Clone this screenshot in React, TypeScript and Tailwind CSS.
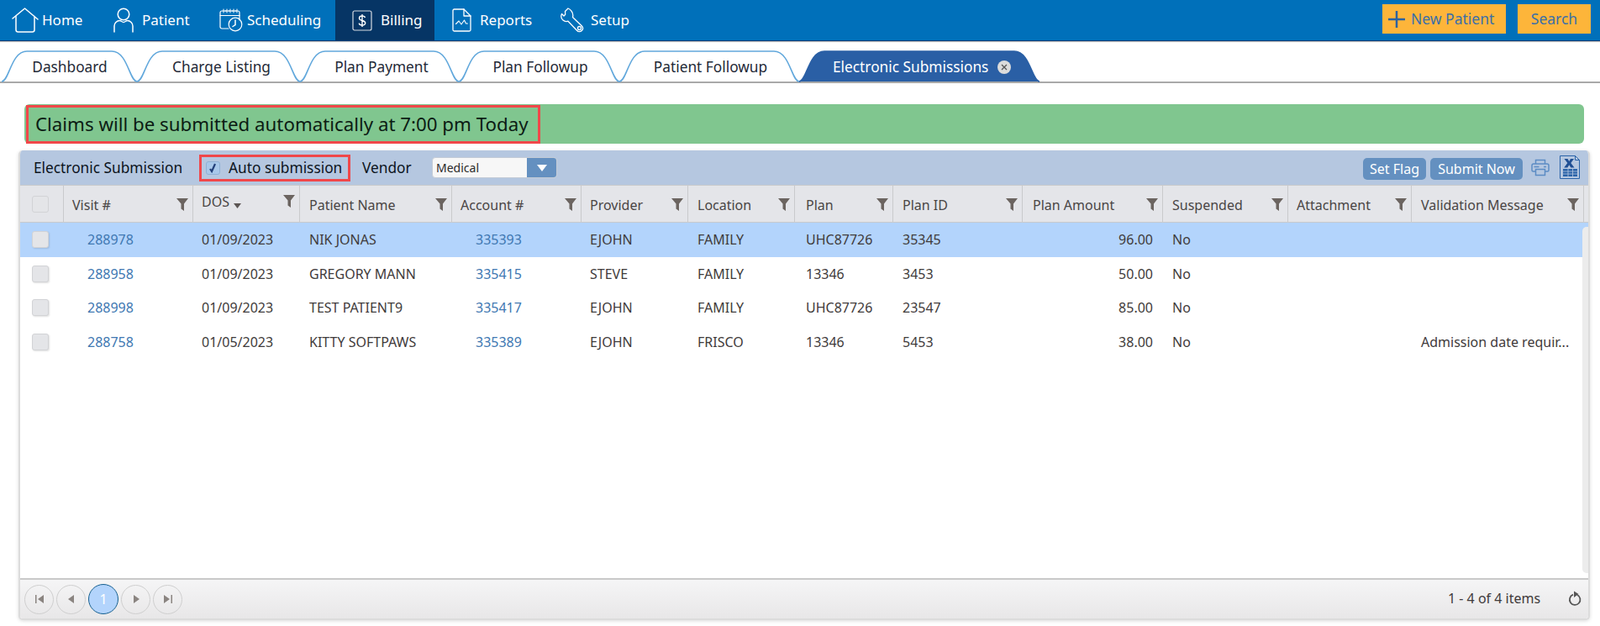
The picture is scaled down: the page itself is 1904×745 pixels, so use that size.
const font = "font-['Open_Sans',sans-serif]"

const cols = 'grid grid-cols-[52px_154px_127px_181px_154px_127px_127px_117px_154px_167px_149px_147px_205px]'

const headers = [
  { label: 'Visit #', pad: 'pl-[10px]' },
  { label: 'DOS', pad: 'pl-[10px]', sort: true },
  { label: 'Patient Name', pad: 'pl-[11px]' },
  { label: 'Account #', pad: 'pl-[10px]' },
  { label: 'Provider', pad: 'pl-[10px]' },
  { label: 'Location', pad: 'pl-[11px]' },
  { label: 'Plan', pad: 'pl-[13px]' },
  { label: 'Plan ID', pad: 'pl-[11px]' },
  { label: 'Plan Amount', pad: 'pl-[12px]' },
  { label: 'Suspended', pad: 'pl-[11px]' },
  { label: 'Attachment', pad: 'pl-[10px]' },
  { label: 'Validation Message', pad: 'pl-[11px]' }
]

const rows = [
  ['288978', '01/09/2023', 'NIK JONAS', '335393', 'EJOHN', 'FAMILY', 'UHC87726', '35345', '96.00', 'No', ''],
  ['288958', '01/09/2023', 'GREGORY MANN', '335415', 'STEVE', 'FAMILY', '13346', '3453', '50.00', 'No', ''],
  ['288998', '01/09/2023', 'TEST PATIENT9', '335417', 'EJOHN', 'FAMILY', 'UHC87726', '23547', '85.00', 'No', ''],
  ['288758', '01/05/2023', 'KITTY SOFTPAWS', '335389', 'EJOHN', 'FRISCO', '13346', '5453', '38.00', 'No', 'Admission date requir...']
]

const tabs = [
  { label: 'Dashboard', x0: 2, x1: 163, pad: 'pl-[1px]' },
  { label: 'Charge Listing', x0: 163, x1: 357, pad: 'pl-[7px]' },
  { label: 'Plan Payment', x0: 357, x1: 546, pad: 'pl-[5px]' },
  { label: 'Plan Followup', x0: 546, x1: 737, pad: 'pl-[3px]' },
  { label: 'Patient Followup', x0: 737, x1: 951, pad: 'pl-[3px]' }
]

const HomeIcon = () => (
  <svg width="32" height="30" viewBox="0 0 32 30" fill="none" stroke="currentColor" strokeWidth="1.5" strokeLinejoin="round" strokeLinecap="round">
    <path d="M1 13 15.5 1 31 14" />
    <path d="M5 10.5V26.5a2.5 2.5 0 0 0 2.5 2.5h17a2.5 2.5 0 0 0 2.5-2.5V10.5" />
  </svg>
)

const PatientIcon = () => (
  <svg width="24" height="30" viewBox="0 0 24 30" fill="none" stroke="currentColor" strokeWidth="1.5" strokeLinecap="round">
    <circle cx="12" cy="8" r="6.8" />
    <path d="M1 29v-7c0-3.5 3-6.5 6.5-6.5 1.5 0 3 2 4.5 2s3-2 4.5-2c3.5 0 6.5 3 6.5 6.5v7" />
  </svg>
)

const ScheduleIcon = () => (
  <svg width="28" height="28" viewBox="0 0 28 28" fill="none" stroke="currentColor" strokeWidth="1.2" strokeLinecap="round">
    <path d="M11 24H3a2 2 0 0 1-2-2V5a2 2 0 0 1 2-2h19a2 2 0 0 1 2 2v9" />
    <path d="M1 8.5h23" />
    <path d="M5 1v4M9 1v4M13 1v4M17 1v4M21 1v4" strokeWidth="1" />
    <path d="M7 3h1M11 3h1M15 3h1M19 3h1" />
    <circle cx="19" cy="19" r="7.8" />
    <path d="M19 14v5.5l-3 2" strokeWidth="1.5" />
  </svg>
)

const BillingIcon = () => (
  <svg width="24" height="25" viewBox="0 0 24 25" fill="none" stroke="currentColor" strokeWidth="1.2">
    <rect x="1" y="1" width="22" height="23" rx="2" stroke="#d6dbe2" />
    <path d="M15.5 9c-.4-1.5-1.8-2-3.5-2-2 0-3.5 1-3.5 2.7 0 3.8 7.2 1.8 7.2 5.6 0 1.7-1.6 2.7-3.7 2.7-1.9 0-3.5-.8-3.8-2.4M12 5v15" strokeWidth="1.4" />
  </svg>
)

const ReportIcon = () => (
  <svg width="23" height="28" viewBox="0 0 23 28" fill="none" stroke="currentColor" strokeWidth="1.3" strokeLinejoin="round" strokeLinecap="round">
    <path d="M14 1H2.5A1.5 1.5 0 0 0 1 2.5v23A1.5 1.5 0 0 0 2.5 27h18a1.5 1.5 0 0 0 1.5-1.5V9z" />
    <path d="M14 1v8h8" />
    <path d="M4.5 18.5 8 15l3 4 3.5-5 2 4h2" strokeWidth="1.1" />
  </svg>
)

const WrenchIcon = () => (
  <svg width="30" height="30" viewBox="0 0 30 30" fill="none" stroke="currentColor" strokeWidth="1.3" strokeLinejoin="round">
    <path d="M9 1 5.5 4.5l.2 3.8L4 10 1.5 7.5C.3 10 .8 13 3 15c1.7 1.5 4 2 6 1.2l10.5 11c1.7 1.9 4 2 5.7.3 1.7-1.7 1.7-4 0-5.7L14.500 11.500c.7-2.500.2-5-1.500-7.300C11.800 2.600 10.500 1.500 9 1z" />
    <circle cx="22.500" cy="24.500" r="2" />
  </svg>
)

const navIcons: Record<string, () => React.ReactElement> = {
  Home: HomeIcon,
  Patient: PatientIcon,
  Scheduling: ScheduleIcon,
  Billing: BillingIcon,
  Reports: ReportIcon,
  Setup: WrenchIcon
}

const Funnel = ({ className }: { className: string }) => (
  <svg className={className} width="14" height="15" viewBox="0 0 14 15" fill="#6b6460">
    <path d="M0 0h14L9 6.500V15L5.500 12.500V6.500z" />
  </svg>
)

const Check = ({ className }: { className: string }) => (
  <span className={`block w-[20px] h-[20px] rounded-[3px] border border-[#d2d3d6] bg-[#e4e5e8] ${className}`} />
)

const PagerBtn = ({ d }: { d: string }) => (
  <span className="w-[35px] h-[35px] rounded-full border border-[#cfcfcf] flex items-center justify-center">
    <svg width="12" height="12" viewBox="0 0 12 12" fill="#8a8480">
      <path d={d} />
    </svg>
  </span>
)

const TabShape = ({ w, active }: { w: number; active?: boolean }) => (
  <svg className="absolute left-0 top-0" width={w} height="40" viewBox={`0 0 ${w} 40`} fill="none">
    <path
      d={`M0 39C9 39 11 3 30 3H${w - 30}C${w - 11} 3 ${w - 9} 39 ${w} 39`}
      fill={active ? '#2a5fa5' : '#fff'}
      stroke={active ? '#2a5fa5' : '#62a8dc'}
      strokeWidth="1.6"
    />
  </svg>
)

const App = () => {
  return (
    <div className={`relative w-[1904px] h-[745px] overflow-hidden bg-white text-[#3c3c3c] ${font}`}>
      {/* top nav */}
      <div className="h-[49px] bg-[#0070ba] border-b border-[#0b3d78] shadow-[0_1px_1px_rgba(0,0,0,0.25)] flex items-start">
        <div className="flex h-[48px] text-white text-[17px]">
          {['Home', 'Patient', 'Scheduling', 'Billing', 'Reports', 'Setup'].map((n) => {
            const Icon = navIcons[n]
            const cls: Record<string, string> = {
              Home: 'w-[117px] pl-[14px] gap-[4px]',
              Patient: 'w-[127px] pl-[18px] gap-[10px]',
              Scheduling: 'w-[155px] pl-[17px] gap-[5px]',
              Billing: 'w-[118px] pl-[20px] gap-[10px] bg-[#063565]',
              Reports: 'w-[133px] pl-[21px] gap-[10px]',
              Setup: 'w-[120px] pl-[17px] gap-[6px]'
            }
            return (
              <div key={n} className={`h-[48px] flex items-center ${cls[n]}`}>
                <Icon />
                <span>{n}</span>
              </div>
            )
          })}
        </div>
        <div className="ml-auto flex mt-[5px] mr-[11px] gap-[14px] text-[#3b6fa8] text-[17.500px]">
          <div className="w-[147px] h-[35px] bg-[#fdb53a] flex items-center pl-[7px] gap-[7px]">
            <svg width="20" height="20" viewBox="0 0 20 20" stroke="#2c62a0" strokeWidth="2.500">
              <path d="M10 0v20M0 10h20" />
            </svg>
            <span>New Patient</span>
          </div>
          <div className="w-[87px] h-[35px] bg-[#fdb53a] flex items-center justify-center">Search</div>
        </div>
      </div>

      {/* tabs */}
      <div className="absolute left-0 top-[58px] w-full h-[41px] border-b-2 border-[#a9a9a9]">
        {tabs.map((t) => (
          <div
            key={t.label}
            className={`absolute top-0 h-[40px] flex items-center justify-center text-[17.300px] text-[#1f2a37] ${t.pad}`}
            style={{ left: t.x0, width: t.x1 - t.x0 }}
          >
            <TabShape w={t.x1 - t.x0} />
            <span className="relative top-[2px]">{t.label}</span>
          </div>
        ))}
        <div className="absolute left-[951px] top-0 w-[286px] h-[40px] text-white text-[17.300px]">
          <TabShape w={286} active />
          <span className="absolute left-[40px] top-[9px]">Electronic Submissions</span>
          <span className="absolute left-[236px] top-[14px] w-[16px] h-[16px] rounded-full bg-[#dcdcdc] flex items-center justify-center">
            <svg width="8" height="8" viewBox="0 0 8 8" stroke="#555" strokeWidth="1.300">
              <path d="M1 1l6 6M7 1 1 7" />
            </svg>
          </span>
        </div>
      </div>

      {/* notice */}
      <div className="absolute left-[29px] top-[124px] w-[1856px] h-[47px] bg-[#80c68f] rounded-[6px]" />
      <div className="absolute left-[31px] top-[125px] w-[612px] h-[46px] border-[3px] border-[#f0474a] flex items-center pl-[8px] text-[22.300px] whitespace-nowrap text-[#0c1c14]">
        Claims will be submitted automatically at 7:00 pm Today
      </div>

      {/* grid panel */}
      <div className="absolute left-[22px] top-[179px] w-[1870px] h-[559px] rounded-[5px] border-2 border-t-0 border-[#dcdcdc] bg-white shadow-[0_1px_4px_rgba(0,0,0,0.15)] overflow-hidden">
        <div className="h-[41px] bg-[#b5c7e0] relative text-[#0c141d]">
          <span className="absolute left-[16px] top-[8px] text-[17.300px]">Electronic Submission</span>
          <div className="absolute left-[213px] top-[5px] w-[180px] h-[32px] border-[3px] border-[#f0474a]" />
          <span className="absolute left-[221px] top-[13px] w-[17px] h-[16px] rounded-[3px] bg-[#a9c8ea] border border-[#8fb0d4] flex items-center justify-center">
            <svg width="11" height="12" viewBox="0 0 11 12" fill="none" stroke="#23407a" strokeWidth="2.200">
              <path d="M2 7l2 3 4-9" />
            </svg>
          </span>
          <span className="absolute left-[248px] top-[8px] text-[17.300px]">Auto submission</span>
          <span className="absolute left-[407px] top-[8px] text-[17.300px]">Vendor</span>
          <div className="absolute left-[490px] top-[8px] w-[149px] h-[25px] rounded-[4px] bg-[#f7f7f7] border border-[#c3cbd6] flex overflow-hidden">
            <span className="flex-1 pl-[4px] text-[14px] leading-[23px] text-[#2b2b2b]">Medical</span>
            <span className="w-[35px] bg-[#6490c0] flex items-center justify-center">
              <svg width="12" height="8" viewBox="0 0 12 8" fill="#fff">
                <path d="M0 0h12L6 8z" />
              </svg>
            </span>
          </div>
          <span className="absolute left-[1598px] top-[9px] w-[75px] h-[26px] rounded-[5px] bg-[#6490c0] text-white text-[16px] leading-[26px] text-center">Set Flag</span>
          <span className="absolute left-[1678px] top-[9px] w-[110px] h-[26px] rounded-[5px] bg-[#6490c0] text-white text-[16px] leading-[26px] text-center">Submit Now</span>
          <svg className="absolute left-[1798px] top-[10px]" width="22" height="21" viewBox="0 0 22 21" fill="none" stroke="#5c8cc4" strokeWidth="1.500">
            <path d="M5.500 6V1.500h11V6" />
            <path d="M5 15H2.500A1.500 1.500 0 0 1 1 13.500V8a2 2 0 0 1 2-2h16a2 2 0 0 1 2 2v5.500a1.500 1.500 0 0 1-1.500 1.500H17" />
            <path d="M5.500 12.500h11v7h-11z" />
            <path d="M3.500 9.500h6M15 9.500h3" />
          </svg>
          <svg className="absolute left-[1832px] top-[6px]" width="24" height="28" viewBox="0 0 24 28" fill="none">
            <path d="M.5.500h18l5 5v22H.5z" stroke="#2a63a8" />
            <path d="M18.500.500v5h5" stroke="#2a63a8" />
            <path d="M5.500 4h4l1.800 3L13 4h4l-3.700 5L17.500 14.500h-4.200L11.300 11.200 9.300 14.500H5.200L9.300 9z" fill="#1f4f94" />
            <path d="M4 16h17v9H4z" fill="#2a63a8" />
            <path d="M4 19h17M4 22h17M10 16v9M15.500 16v9" stroke="#b5c7e0" strokeWidth=".8" />
          </svg>
        </div>

        {/* column headers */}
        <div className={`${cols} h-[45px] bg-[#e4e5e9] border-y border-[#c9cacc] text-[16px] text-[#4a4545]`}>
          <div className="flex items-center pl-[14px] border-r border-[#c9cacc]">
            <Check className="" />
          </div>
          {headers.map((h) => (
            <div key={h.label} className={`relative flex items-center border-r border-[#c9cacc] ${h.pad}`}>
              {h.sort ? (
                <>
                  <span className="relative top-[-3px]">{h.label}</span>
                  <svg className="relative left-[5px] top-[2px]" width="9" height="6" viewBox="0 0 9 6" fill="#5b5553">
                    <path d="M0 0h9L4.500 6z" />
                  </svg>
                </>
              ) : (
                <span className="relative top-[1px]">{h.label}</span>
              )}
              <Funnel className={`absolute right-[5px] ${h.sort ? 'top-[11px]' : 'top-[15px]'}`} />
            </div>
          ))}
        </div>

        {/* rows */}
        {rows.map((r, i) => (
          <div key={r[0]} className={`${cols} h-[40.500px] items-center text-[16px] text-[#3f3b3b] ${i === 0 ? 'bg-[#b3d4fc]' : ''}`}>
            <div className="pl-[14px]">
              <Check className="shadow-[1px_1px_2px_rgba(0,0,0,0.12)]" />
            </div>
            <a className="pl-[28px] text-[#4078b2]">{r[0]}</a>
            <span className="pl-[10px]">{r[1]}</span>
            <span className="pl-[11px]">{r[2]}</span>
            <a className="pl-[28px] text-[#4078b2]">{r[3]}</a>
            <span className="pl-[10px]">{r[4]}</span>
            <span className="pl-[11px]">{r[5]}</span>
            <span className="pl-[13px]">{r[6]}</span>
            <span className="pl-[11px]">{r[7]}</span>
            <span className="pr-[12px] text-right">{r[8]}</span>
            <span className="pl-[11px]">{r[9]}</span>
            <span />
            <span className="pl-[11px] whitespace-nowrap">{r[10]}</span>
          </div>
        ))}

        {/* scrollbar track */}
        <div className="absolute right-0 top-[91px] bottom-[54px] w-[7px] rounded-l-[5px] bg-[#ececec]" />

        {/* footer */}
        <div className="absolute left-0 right-0 bottom-0 h-[48px] border-t-2 border-[#c9c9c9] bg-gradient-to-b from-[#f5f5f6] to-[#e8e7e8] flex items-center pl-[5px] gap-[3px]">
          <PagerBtn d="M1 1h1.500v10H1zM11 1v10L4 6z" />
          <PagerBtn d="M9 1v10L2 6z" />
          <span className="w-[36px] h-[36px] rounded-full border border-[#17608f] bg-[#b3d4fc] text-white text-[16px] flex items-center justify-center">1</span>
          <PagerBtn d="M3 1v10l7-5z" />
          <PagerBtn d="M1 1v10l7-5zM9.500 1H11v10H9.500z" />
          <span className="absolute left-[1699px] top-[10px] text-[16px] text-[#3f3b3b]">1 - 4 of 4 items</span>
          <svg className="absolute left-[1842px] top-[13px]" width="16" height="19" viewBox="0 0 16 19" fill="none" stroke="#555" strokeWidth="1.800">
            <path d="M6 4.700A6.300 6.300 0 1 0 11 5" />
            <path d="M7 .500 12.500 4 7 8z" fill="#555" stroke="none" />
          </svg>
        </div>
      </div>
    </div>
  )
}

export default App
